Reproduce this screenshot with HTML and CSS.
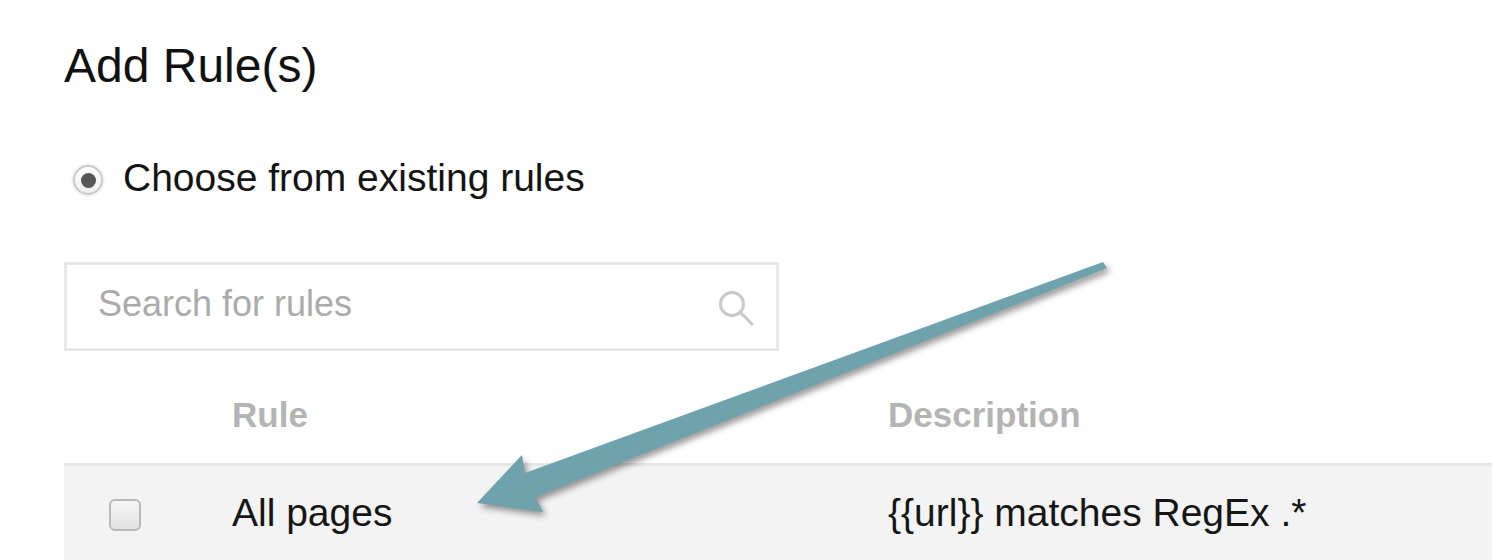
FILE: index.html
```html
<!DOCTYPE html>
<html>
<head>
<meta charset="utf-8">
<link rel="stylesheet" href="styles.css">
</head>
<body>
<div class="page">
  <h1 class="title">Add Rule(s)</h1>
  <div class="radio-row">
    <span class="radio"><span class="radio-dot"></span></span>
    <span class="radio-label">Choose from existing rules</span>
  </div>
  <div class="search">
    <span class="search-placeholder">Search for rules</span>
    <svg class="search-icon" width="38" height="38" viewBox="0 0 38 38">
      <circle cx="14" cy="14" r="11.5" fill="none" stroke="#c9c9c9" stroke-width="3"/>
      <line x1="22.5" y1="22.5" x2="34" y2="34" stroke="#c9c9c9" stroke-width="3" stroke-linecap="round"/>
    </svg>
  </div>
  <div class="table">
    <div class="thead">
      <div class="cell-check"></div>
      <div class="cell-rule th">Rule</div>
      <div class="cell-desc th">Description</div>
    </div>
    <div class="trow">
      <div class="cell-check"><span class="checkbox"></span></div>
      <div class="cell-rule td">All pages</div>
      <div class="cell-desc td">{{url}} matches RegEx .*</div>
    </div>
  </div>
</div>
<svg class="arrow" width="1492" height="560" viewBox="0 0 1492 560">
  <polygon points="1103,262 1107,268 535,497 543,512 477,503 522,455 525,473" fill="#6ea3ad"/>
</svg>
</body>
</html>
```
FILE: styles.css
```css
html, body {
  margin: 0;
  padding: 0;
  background: #ffffff;
}
body {
  font-family: "Liberation Sans", Arial, sans-serif;
  color: #161616;
  width: 1492px;
  height: 560px;
  overflow: hidden;
  position: relative;
}
.page {
  padding: 38px 0 0 64px;
}
.title {
  margin: 0;
  font-size: 48px;
  line-height: 56px;
  font-weight: normal;
  color: #111;
}
.radio-row {
  margin-top: 62px;
  display: flex;
  align-items: flex-start;
  height: 44px;
}
.radio {
  width: 26px;
  height: 26px;
  margin-top: 9px;
  margin-left: 9px;
  border-radius: 50%;
  border: 2px solid #cbcbcb;
  background: linear-gradient(#ffffff, #ededed);
  box-shadow: 0 0 2px 1px #e6e6e6;
  display: flex;
  align-items: center;
  justify-content: center;
}
.radio-dot {
  width: 15px;
  height: 15px;
  border-radius: 50%;
  background: #575757;
}
.radio-label {
  margin-left: 20px;
  font-size: 39px;
  line-height: 44px;
  color: #141414;
}
.search {
  margin-top: 62px;
  border: 3px solid #e7e7e7;
  display: flex;
  align-items: center;
  justify-content: space-between;
  padding: 0 20px 0 31px;
  box-sizing: border-box;
  width: 715px;
  height: 89px;
}
.search-placeholder {
  font-size: 36px;
  color: #ababab;
  padding-bottom: 6px;
}
.search-icon {
  display: block;
  margin-top: 4px;
}
.table {
  width: 1428px;
}
.thead, .trow {
  display: grid;
  grid-template-columns: 168px 656px 1fr;
}
.thead {
  padding: 44px 0 28px 0;
  border-bottom: 3px solid #e6e6e6;
}
.th {
  font-size: 35px;
  line-height: 40px;
  font-weight: bold;
  color: #b4b4b4;
}
.trow {
  background: #f3f3f3;
  padding: 25px 0 30px 0;
}
.td {
  font-size: 39px;
  line-height: 44px;
  color: #161616;
}
.cell-check {
  display: flex;
  align-items: flex-start;
}
.checkbox {
  display: block;
  width: 28px;
  height: 28px;
  margin-left: 45px;
  margin-top: 8px;
  border: 2px solid #b9b9b9;
  border-radius: 6px;
  background: linear-gradient(#f6f6f6, #e2e2e2);
}
.arrow {
  position: absolute;
  left: 0;
  top: 0;
  pointer-events: none;
  filter: drop-shadow(3px 4px 3px rgba(0, 0, 0, 0.4));
}
```
